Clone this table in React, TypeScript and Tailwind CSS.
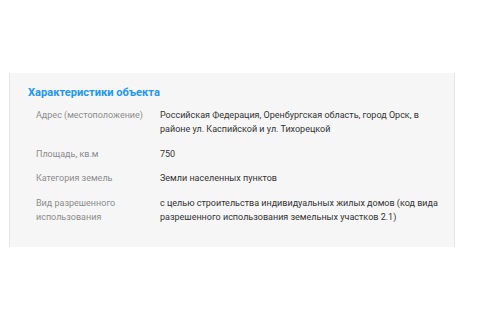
export default function App() {
  const rows: [string, string][] = [
    ["Адрес (местоположение)", "Российская Федерация, Оренбургская область, город Орск, в районе ул. Каспийской и ул. Тихорецкой"],
    ["Площадь, кв.м", "750"],
    ["Категория земель", "Земли населенных пунктов"],
    ["Вид разрешенного использования", "с целью строительства индивидуальных жилых домов (код вида разрешенного использования земельных участков 2.1)"],
  ];
  return (
    <div className="w-[480px] h-[320px] bg-white pt-[73px] pl-[9px] font-['Roboto',sans-serif]">
      <div className="w-[446px] h-[174px] bg-[#f6f6f6] border-x border-[#e6e6e6] pt-[12px] pl-[18px]">
        <h2 className="text-[11.1px] leading-[16px] font-bold text-[#2196f3]">Характеристики объекта</h2>
        <div className="mt-[7px] pl-[8px] flex flex-col gap-[10.5px]">
          {rows.map(([k, v]) => (
            <div key={k} className="flex text-[9px] leading-[14px]">
              <div className="w-[124px] text-[#8c8c8c] pr-2">{k}</div>
              <div className="w-[282px] text-[#333]">{v}</div>
            </div>
          ))}
        </div>
      </div>
    </div>
  );
}
